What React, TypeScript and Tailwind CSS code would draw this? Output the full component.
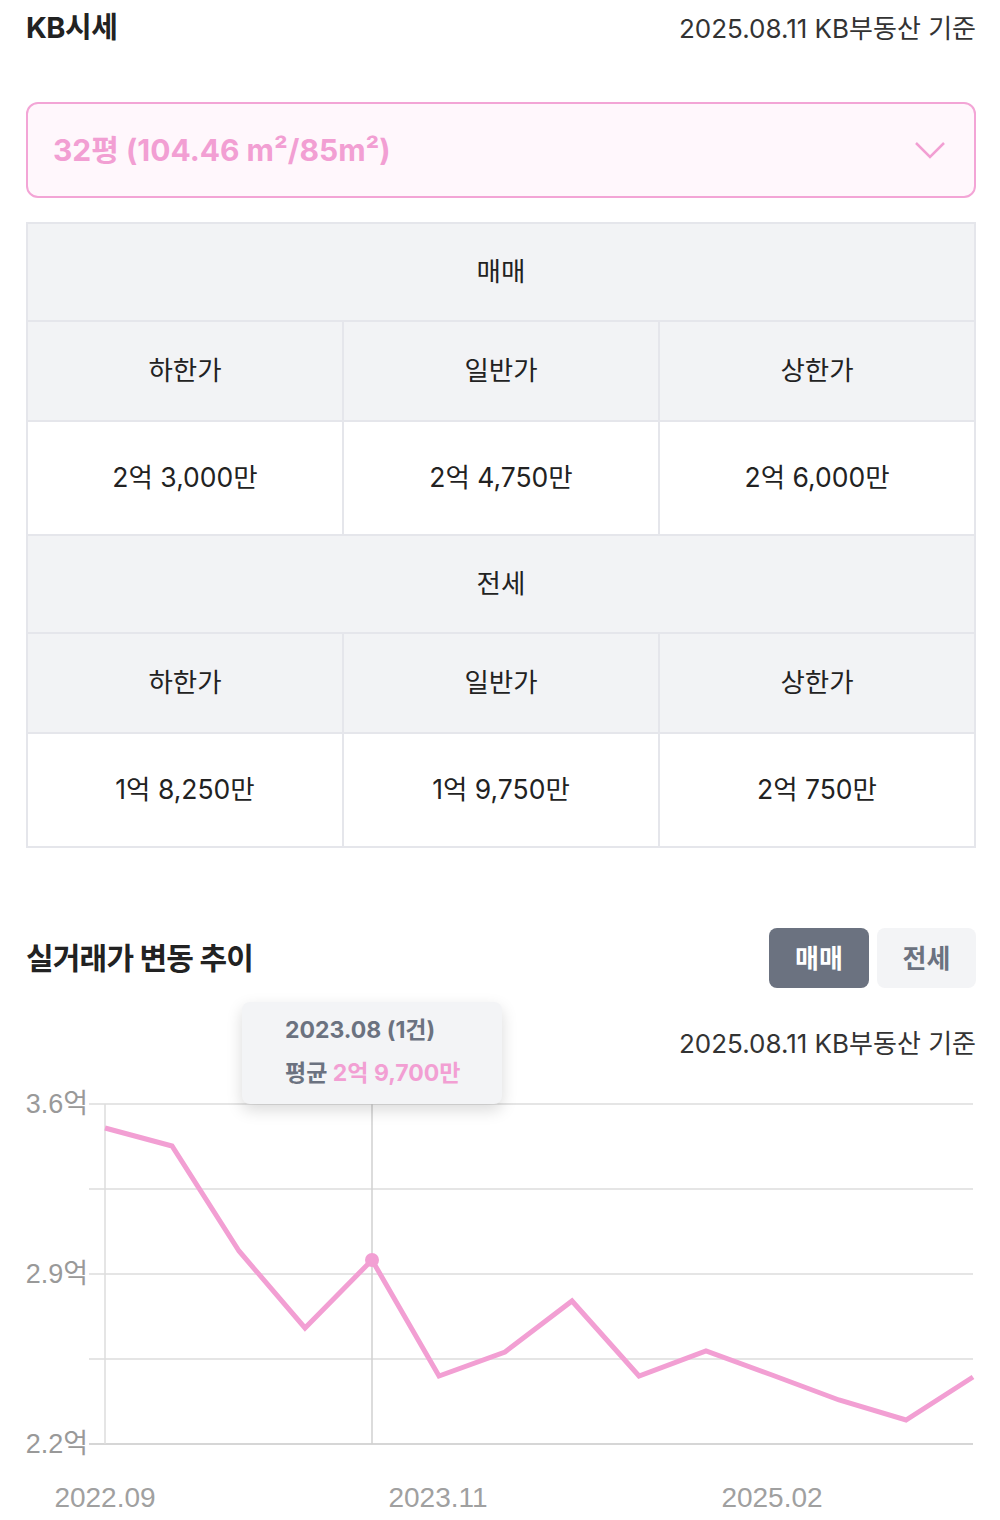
import React from "react";

const PINK = "#f29fd3";

const pts: [number, number][] = [
  [105, 1128],
  [172, 1146],
  [239, 1251],
  [305, 1328],
  [372, 1260],
  [439, 1376],
  [505, 1352],
  [572, 1301],
  [639, 1376],
  [706, 1351],
  [772, 1375],
  [839, 1400],
  [906, 1420],
  [973, 1377],
];

function Cell({ children, head, first, tall }: { children: React.ReactNode; head?: boolean; first?: boolean; tall?: boolean }) {
  return (
    <div
      className={
        "flex-1 flex items-center justify-center text-[26.5px] text-[#222] " +
        (head ? "bg-[#f2f3f5] " : "bg-white ") +
        (first ? "" : "border-l-2 border-[#e5e6eb] ") +
        (tall ? "h-[112px]" : "h-[98px]")
      }
    >
      {children}
    </div>
  );
}

function Block({ title, vals }: { title: string; vals: string[] }) {
  return (
    <>
      <div className="h-[98px] flex items-center justify-center bg-[#f2f3f5] text-[26.5px] text-[#222] border-b-2 border-[#e5e6eb]">
        {title}
      </div>
      <div className="flex border-b-2 border-[#e5e6eb]">
        <Cell head first>하한가</Cell>
        <Cell head>일반가</Cell>
        <Cell head>상한가</Cell>
      </div>
      <div className="flex">
        <Cell first tall>{vals[0]}</Cell>
        <Cell tall>{vals[1]}</Cell>
        <Cell tall>{vals[2]}</Cell>
      </div>
    </>
  );
}

export default function App() {
  const line = pts.map((p) => `${p[0]},${p[1] - 1080}`).join(" ");
  return (
    <div
      className="w-[1000px] h-[1520px] bg-white relative overflow-hidden"
      style={{ fontFamily: "Inter, 'Noto Sans CJK KR', sans-serif" }}
    >
      <div className="pl-[26px] pr-[24px]">
        <div className="flex items-center justify-between h-[56px]">
          <div className="text-[29px] font-bold text-[#222] tracking-[-0.5px]">KB시세</div>
          <div className="text-[26px] text-[#333]">2025.08.11 KB부동산 기준</div>
        </div>

        <div className="mt-[46px] h-[96px] rounded-[12px] border-2 border-[#f3a5d6] bg-[#fff7fc] flex items-center justify-between pl-[25px] pr-[28px]">
          <div className="text-[30px] font-bold" style={{ color: PINK }}>
            32평 (104.46 m²/85m²)
          </div>
          <svg width="32" height="18" viewBox="0 0 32 18" fill="none">
            <path d="M2 2 L16 16 L30 2" stroke={PINK} strokeWidth="2.5" />
          </svg>
        </div>

        <div className="mt-[24px] border-2 border-[#e5e6eb]">
          <Block title="매매" vals={["2억 3,000만", "2억 4,750만", "2억 6,000만"]} />
          <div className="border-t-2 border-[#e5e6eb]" />
          <Block title="전세" vals={["1억 8,250만", "1억 9,750만", "2억 750만"]} />
        </div>

        <div className="mt-[80px] flex items-center justify-between">
          <div className="text-[30px] font-bold text-[#222] tracking-[-0.8px]">실거래가 변동 추이</div>
          <div className="flex gap-[8px]">
            <div className="w-[100px] h-[60px] rounded-[8px] bg-[#6b7280] text-white font-bold text-[26px] flex items-center justify-center">
              매매
            </div>
            <div className="w-[99px] h-[60px] rounded-[8px] bg-[#f3f4f6] text-[#6b7280] font-bold text-[26px] flex items-center justify-center">
              전세
            </div>
          </div>
        </div>

        <div className="mt-[36px] flex justify-end">
          <div className="text-[26px] text-[#333]">2025.08.11 KB부동산 기준</div>
        </div>
      </div>

      <svg className="absolute left-0 top-[1080px]" width="1000" height="440" viewBox="0 0 1000 440">
        {[24, 109, 194, 279].map((y) => (
          <line key={y} x1="89" x2="973" y1={y} y2={y} stroke="#dcdcdc" strokeWidth="1.5" />
        ))}
        <line x1="89" x2="973" y1="364" y2="364" stroke="#c8c8c8" strokeWidth="1.5" />
        <line x1="105" x2="105" y1="24" y2="364" stroke="#dcdcdc" strokeWidth="1.5" />
        <line x1="372" x2="372" y1="24" y2="364" stroke="#d0d0d0" strokeWidth="1.5" />
        <g fontFamily="'Liberation Sans', 'Noto Sans CJK KR', sans-serif" fill="#999999" fontSize="27">
          <text x="88" y="33" textAnchor="end">3.6억</text>
          <text x="88" y="203" textAnchor="end">2.9억</text>
          <text x="88" y="373" textAnchor="end">2.2억</text>
        </g>
        <g fontFamily="'Liberation Sans', sans-serif" fill="#a0a0a0" fontSize="28">
          <text x="105" y="427" textAnchor="middle">2022.09</text>
          <text x="438" y="427" textAnchor="middle">2023.11</text>
          <text x="772" y="427" textAnchor="middle">2025.02</text>
        </g>
        <polyline points={line} fill="none" stroke={PINK} strokeWidth="5" strokeLinejoin="miter" />
        <circle cx="372" cy="180" r="7" fill={PINK} />
      </svg>

      <div className="absolute left-[242px] top-[1002px] w-[260px] h-[102px] rounded-[8px] bg-[#f3f4f6] shadow-[0_6px_16px_rgba(0,0,0,0.15)] pl-[43px] pt-[12px]">
        <div className="text-[23px] font-bold text-[#6b7280] leading-[32px]">2023.08 (1건)</div>
        <div className="text-[23px] font-bold text-[#6b7280] leading-[32px] mt-[11px]">
          평균 <span style={{ color: PINK }}>2억 9,700만</span>
        </div>
      </div>
    </div>
  );
}
